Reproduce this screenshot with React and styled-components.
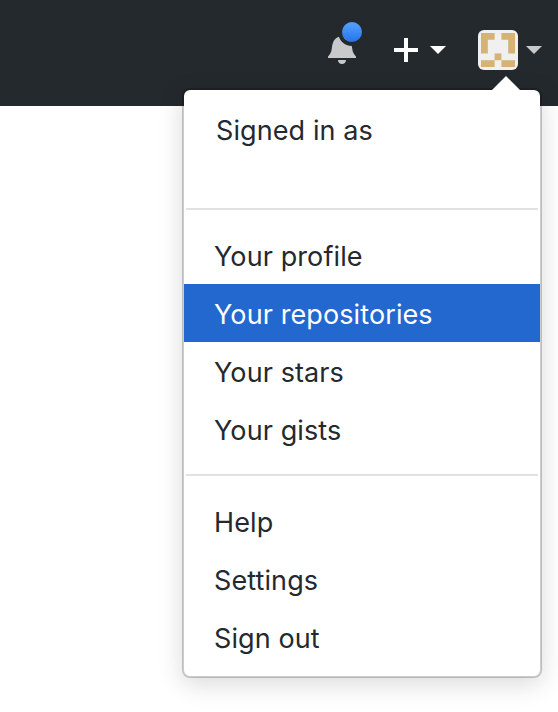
import React from "react";
import styled, {createGlobalStyle} from "styled-components";

const accountLinks = ["Your profile", "Your repositories", "Your stars", "Your gists"];
const siteLinks = ["Help", "Settings", "Sign out"];

function BellIcon() {
    return (
        <svg width="28" height="28" viewBox="0 0 28 28" fill="#c8c9ca">
            <path d="M0 20.4C2.2 18.2 3.4 16.4 3.8 12.6C4.4 6.6 6 2.6 10.8 0.8C12.8 0 15.2 0 17.2 0.8C22 2.6 23.6 6.6 24.2 12.6C24.6 16.4 25.8 18.2 28 20.4V22H0Z"/>
            <path d="M10 24H18C18 26.4 16.2 28 14 28C11.8 28 10 26.4 10 24Z"/>
        </svg>
    )
}

function Identicon() {
    return (
        <svg width="34" height="34" viewBox="0 0 5 5" fill="#d5b275">
            <path d="M0 0H2V1H1V3H0Z"/>
            <path d="M5 0H3V1H4V3H5Z"/>
            <path d="M2 3H3V4H2Z"/>
            <path d="M0 4H2V5H0Z"/>
            <path d="M3 4H5V5H3Z"/>
        </svg>
    )
}

function App() {
    return (
        <>
            <GlobalStyle/>
            <Header>
                <Notifications aria-label="Notifications">
                    <BellIcon/>
                    <Unread/>
                </Notifications>
                <CreateButton aria-label="Create new">
                    <svg width="24" height="24" viewBox="0 0 24 24" fill="#ffffff">
                        <path d="M10 0H14V10H24V14H14V24H10V14H0V10H10Z"/>
                    </svg>
                    <Caret $color="#ffffff"/>
                </CreateButton>
                <Account>
                    <Avatar>
                        <Identicon/>
                    </Avatar>
                    <Caret $color="#c8c9ca"/>
                </Account>
                <Menu>
                    <SignedIn>Signed in as</SignedIn>
                    <Divider/>
                    {accountLinks.map(label => (
                        <MenuItem key={label} href="#" $active={label === "Your repositories"}>{label}</MenuItem>
                    ))}
                    <Divider/>
                    {siteLinks.map(label => (
                        <MenuItem key={label} href="#">{label}</MenuItem>
                    ))}
                </Menu>
            </Header>
        </>
    )
}

const GlobalStyle = createGlobalStyle`
  *{
    box-sizing: border-box;
  }
  body{
    margin: 0;
    min-height: 712px;
    overflow: hidden;
    background: #ffffff;
    font-family: Inter, "Liberation Sans", sans-serif;
  }
`;

const Header = styled.header`
  position: relative;
  display: flex;
  justify-content: flex-end;
  align-items: center;
  height: 106px;
  padding: 0 16px 6px 0;
  background: #24292e;
`;

const Notifications = styled.button`
  position: relative;
  display: flex;
  margin-right: 38px;
  padding: 0;
  border: 0;
  background: none;
`;

const Unread = styled.span`
  position: absolute;
  top: -14px;
  right: -6px;
  width: 20px;
  height: 20px;
  border-radius: 50%;
  background: linear-gradient(#54a3ff, #2672ea);
  box-shadow: 0 0 0 4px #24292e;
`;

const CreateButton = styled.button`
  display: flex;
  align-items: center;
  gap: 12px;
  margin-right: 32px;
  padding: 0;
  border: 0;
  background: none;
`;

const Caret = styled.span`
  border: 8px solid transparent;
  border-top-color: ${props => props.$color};
  border-bottom: 0;
`;

const Account = styled.div`
  display: flex;
  align-items: center;
  gap: 8px;
`;

const Avatar = styled.span`
  display: flex;
  padding: 3px;
  border-radius: 6px;
  background: #f0f0f0;
`;

const Menu = styled.nav`
  position: absolute;
  top: 88px;
  right: 16px;
  width: 360px;
  padding-bottom: 10px;
  border: 2px solid rgba(0, 0, 0, 0.2);
  border-radius: 8px;
  background: #ffffff;
  background-clip: padding-box;
  box-shadow: 0 6px 24px rgba(0, 0, 0, 0.15);
  &::before{
    content: "";
    position: absolute;
    top: -14px;
    right: 20px;
    border: 14px solid transparent;
    border-top: 0;
    border-bottom-color: #ffffff;
  }
`;

const SignedIn = styled.div`
  height: 118px;
  padding: 20px 32px;
  color: #24292e;
  font-size: 27px;
  letter-spacing: 0.1px;
  line-height: 42px;
`;

const Divider = styled.div`
  height: 2px;
  margin: 0 2px 16px;
  background: #dfe2e5;
  a + &{
    margin-top: 16px;
  }
`;

const MenuItem = styled.a`
  display: block;
  padding: 10px 30px 6px;
  background: ${props => props.$active ? "#2368cf" : "transparent"};
  color: ${props => props.$active ? "#ffffff" : "#24292e"};
  font-size: 27px;
  letter-spacing: 0.1px;
  line-height: 42px;
  text-decoration: none;
`;

export default App;
